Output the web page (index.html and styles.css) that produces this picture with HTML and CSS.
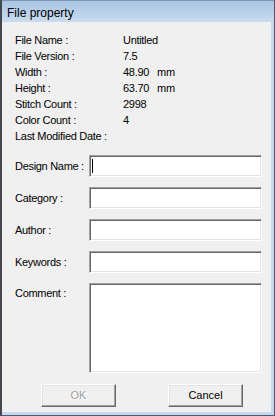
FILE: index.html
```html
<!DOCTYPE html>
<html>
<head>
<meta charset="utf-8">
<title>File property</title>
<link rel="stylesheet" href="styles.css">
</head>
<body>
<div class="window">
  <div class="titlebar">File property</div>
  <div class="client">
    <div class="info">
      <div class="row"><span class="key">File Name :</span><span class="val">Untitled</span></div>
      <div class="row"><span class="key">File Version :</span><span class="val">7.5</span></div>
      <div class="row"><span class="key">Width :</span><span class="val">48.90<span class="unit">mm</span></span></div>
      <div class="row"><span class="key">Height :</span><span class="val">63.70<span class="unit">mm</span></span></div>
      <div class="row"><span class="key">Stitch Count :</span><span class="val">2998</span></div>
      <div class="row"><span class="key">Color Count :</span><span class="val">4</span></div>
      <div class="row"><span class="key">Last Modified Date :</span><span class="val"></span></div>
    </div>
    <div class="form">
      <div class="field"><span class="flabel">Design Name :</span><div class="edit"><span class="caret"></span></div></div>
      <div class="field"><span class="flabel">Category :</span><div class="edit"></div></div>
      <div class="field"><span class="flabel">Author :</span><div class="edit"></div></div>
      <div class="field"><span class="flabel">Keywords :</span><div class="edit"></div></div>
      <div class="field top"><span class="flabel">Comment :</span><div class="edit memo"></div></div>
    </div>
    <div class="buttons">
      <div class="btn disabled">OK</div>
      <div class="btn">Cancel</div>
    </div>
  </div>
</div>
</body>
</html>
```

FILE: styles.css
```css
html, body {
  margin: 0;
  padding: 0;
  background: #c4d8ef;
}
.window {
  box-sizing: border-box;
  width: 275px;
  height: 416px;
  display: flex;
  flex-direction: column;
  background: #c4d8ef;
  border-left: 2px solid #44474c;
  border-right: 1px solid #4a5a6e;
  border-bottom: 1px solid #4a5a6e;
  font-family: "Liberation Sans", Arial, sans-serif;
  font-size: 11px;
  color: #000;
}
.titlebar {
  height: 22px;
  line-height: 24px;
  padding-left: 5px;
  font-size: 12px;
  background: linear-gradient(#a9c4e2, #c9dcf0);
  border-top: 1px solid #7f97b3;
  box-sizing: border-box;
}
.client {
  flex: 1;
  margin-right: 3px;
  margin-bottom: 3px;
  background: #f0f0f0;
  padding: 10px 0 0 13px;
  letter-spacing: -0.3px;
}
.info .row {
  display: flex;
  height: 16px;
  line-height: 16px;
}
.key {
  width: 108px;
}
.unit {
  margin-left: 8px;
}
.form {
  margin-top: 11px;
  display: flex;
  flex-direction: column;
  gap: 10px;
}
.field {
  display: flex;
  align-items: center;
}
.field.top {
  align-items: flex-start;
}
.field.top .flabel {
  padding-top: 4px;
}
.flabel {
  width: 74px;
  line-height: 13px;
}
.edit {
  box-sizing: border-box;
  width: 173px;
  height: 22px;
  background: #fff;
  border: 1px solid;
  border-color: #a0a0a0 #fff #fff #a0a0a0;
  box-shadow: inset 1px 1px #696969, inset -1px -1px #e3e3e3;
  display: flex;
  align-items: center;
  padding-left: 2px;
}
.edit.memo {
  height: 90px;
}
.caret {
  width: 1px;
  height: 14px;
  background: #000;
}
.buttons {
  display: flex;
  gap: 52px;
  margin-top: 11px;
  padding-left: 26px;
}
.btn {
  box-sizing: border-box;
  width: 75px;
  height: 23px;
  line-height: 21px;
  text-align: center;
  background: #f0f0f0;
  border: 1px solid;
  border-color: #fff #696969 #696969 #fff;
  box-shadow: inset -1px -1px #a0a0a0, inset 1px 1px #e3e3e3;
  letter-spacing: 0;
}
.btn.disabled {
  color: #a0a0a0;
  text-shadow: 1px 1px #fff;
}
```
